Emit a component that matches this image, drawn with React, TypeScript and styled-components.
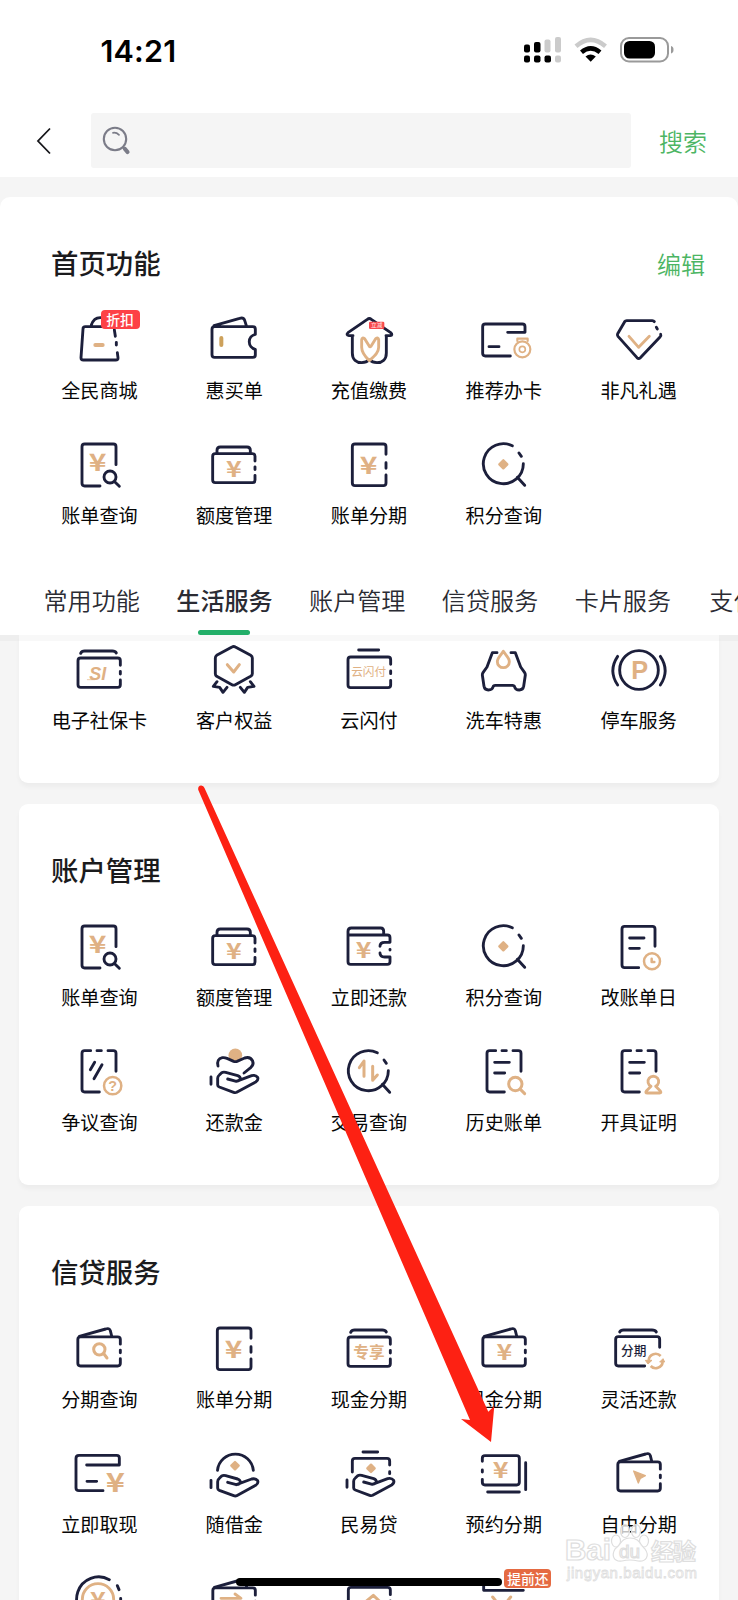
import React from "react";
import styled, { createGlobalStyle } from "styled-components";

const NAVY = "#1c1f3b";
const TAN = "#dfb184";
const CJK = '"Noto Sans CJK SC", "Liberation Sans", sans-serif';

const GlobalStyle = createGlobalStyle`
  * { box-sizing: border-box; }
  body { margin: 0; background: #f5f5f5; font-family: ${CJK}; color: #0b0b0b; }
`;

const Screen = styled.div`
  position: relative;
  width: 738px;
  height: 1600px;
  overflow: hidden;
  display: flex;
  flex-direction: column;
  background: #f5f5f5;
`;

const StatusBar = styled.div`
  flex: none;
  height: 100px;
  padding: 37px 64px 0 100.5px;
  display: flex;
  justify-content: space-between;
  align-items: flex-start;
  background: #fff;
`;

const Clock = styled.div`
  font: 600 30.5px/27px Inter, sans-serif;
  letter-spacing: 0.2px;
  color: #000;
`;

const StatusIcons = styled.svg`
  display: block;
  width: 151px;
  height: 27px;
`;

const SearchHeader = styled.div`
  flex: none;
  height: 77px;
  padding: 13px 31px 9px 36px;
  display: flex;
  align-items: center;
  background: #fff;
`;

const BackIcon = styled.svg`
  width: 16px;
  height: 28px;
  margin-right: 39px;
`;

const SearchField = styled.div`
  width: 540px;
  height: 55px;
  padding-left: 11px;
  display: flex;
  align-items: center;
  background: #f5f5f5;
  border-radius: 3px;
`;

const HeaderAction = styled.button`
  margin-left: auto;
  padding: 0;
  border: 0;
  background: none;
  font: 350 24px/32px ${CJK};
  color: #4cb563;
`;

const Panel = styled.section<{ $home?: boolean; $clipped?: boolean }>`
  flex: none;
  margin: ${(p) => (p.$home ? "20px 0 0" : "0 19px 21px")};
  padding: ${(p) => (p.$clipped ? "4.5px 13px 18px" : p.$home ? "47px 32px 18.2px" : "46.5px 13px 18.7px")};
  height: ${(p) => (p.$clipped ? "148.5px" : "auto")};
  background: #fff;
  border-radius: ${(p) => (p.$home ? "10px 10px 0 0" : p.$clipped ? "0 0 9px 9px" : "9px")};
  box-shadow: ${(p) => (p.$home ? "none" : "0 4px 4px rgba(0, 0, 0, 0.035)")};
`;

const PanelHead = styled.div<{ $home?: boolean }>`
  height: 40px;
  margin-bottom: 25px;
  padding: ${(p) => (p.$home ? "0 1px 0 19px" : "0 19px")};
  display: flex;
  align-items: center;
`;

const PanelTitle = styled.h2`
  margin: -4px 0 0;
  font: 500 27.4px/40px ${CJK};
  color: #1b1b1d;
`;

const ServiceGrid = styled.div`
  display: grid;
  grid-template-columns: repeat(5, 134.8px);
  grid-auto-rows: 125.4px;
`;

const Service = styled.div`
  position: relative;
  display: flex;
  flex-direction: column;
  align-items: center;
`;

const ServiceIcon = styled.svg`
  flex: none;
  display: block;
  width: 70px;
  height: 60px;
  overflow: visible;
  fill: none;
  stroke: ${NAVY};
  stroke-width: 8.6;
  stroke-linecap: round;
  stroke-linejoin: round;
  font-family: ${CJK};

  text {
    stroke: none;
    fill: ${TAN};
    text-anchor: middle;
  }
`;

const ServiceLabel = styled.span`
  margin-top: 10px;
  font: 400 19.1px/22px ${CJK};
  color: #060606;
  white-space: nowrap;
`;

const Badge = styled.span<{ $tone: "red" | "orange" }>`
  position: absolute;
  top: ${(p) => (p.$tone === "red" ? "1px" : "0")};
  left: ${(p) => (p.$tone === "red" ? "68.5px" : "68px")};
  width: ${(p) => (p.$tone === "red" ? "39px" : "47px")};
  height: 19px;
  border-radius: 4px;
  background: ${(p) => (p.$tone === "red" ? "#fd4146" : "#e56a42")};
  color: #fff;
  text-align: center;
  font: 500 13.8px/18px ${CJK};
  z-index: 1;
`;

const Tabs = styled.nav`
  position: relative;
  z-index: 2;
  flex: none;
  height: 57px;
  padding-left: 43.5px;
  display: flex;
  gap: 36.4px;
  background: #fff;
  box-shadow: 0 6px 0 rgba(0, 0, 0, 0.026);
`;

const Tab = styled.div<{ $active?: boolean }>`
  flex: none;
  height: 57px;
  display: flex;
  flex-direction: column;
  align-items: center;
  justify-content: space-between;
  font: ${(p) => (p.$active ? 500 : 350)} 24.1px/44px ${CJK};
  color: #2a2b33;

  &::after {
    content: "";
    width: 52px;
    height: 5px;
    border-radius: 3px;
    background: ${(p) => (p.$active ? "#22ae68" : "transparent")};
  }
`;

const HomeIndicator = styled.div`
  position: absolute;
  left: 236px;
  top: 1578px;
  width: 266px;
  height: 8px;
  border-radius: 4px;
  background: #000;
`;

const Overlay = styled.svg`
  position: absolute;
  inset: 0;
  width: 738px;
  height: 1600px;
  pointer-events: none;
`;

const Yen = ({ x, y, size = 74 }: { x: number; y: number; size?: number }) => (
  <text
    transform={`translate(${x} ${y + size * 0.385}) scale(1.22 1)`}
    fontSize={size}
    fontWeight={700}
  >
    ¥
  </text>
);

const DashedBox = ({ l, r, t, b }: { l: number; r: number; t: number; b: number }) => {
  const m = (t + b) / 2;
  return (
    <path
      d={`M${r} ${t + 22}V${t + 8}Q${r} ${t} ${r - 8} ${t}H${l + 8}Q${l} ${t} ${l} ${t + 8}V${b - 8}Q${l} ${b} ${l + 8} ${b}H${r - 8}Q${r} ${b} ${r} ${b - 8}V${b - 22}M${r} ${m - 4}V${m + 4}`}
    />
  );
};

const Wallet = ({ children }: { children?: React.ReactNode }) => (
  <>
    <DashedBox l={41.5} r={169} t={56.5} b={144} />
    <path d="M46 55L125 33Q136 29 139 38L143 54" />
    {children}
  </>
);

const LidBox = ({ children }: { children?: React.ReactNode }) => (
  <>
    <DashedBox l={42} r={169} t={57} b={145} />
    <path d="M50 43Q53 36 62 36H145Q154 36 157 42" />
    {children}
  </>
);

const Lens = () => (
  <path d="M163 89A60 60 0 1 1 130 35.500M150 57L157 67M145 130L167 154" />
);

const DashedDoc = () => (
  <path d="M106 153H62Q54 153 54 145V37Q54 29 62 29H80M99 29H112M132 29H148Q156 29 156 37V91" />
);

const Palm = () => (
  <path d="M36 112V134M86 118L112 125Q123 124 124 117Q124 111 116 108L80 98Q73 96 68 99L61 106Q56 110 56 116V136Q56 140 61 142L104 158Q109 160 113 158L170 127Q179 121 176 113Q170 105 158 108L112 125" />
);

const Gem = ({ x, y, r = 15 }: { x: number; y: number; r?: number }) => (
  <path
    d={`M${x} ${y - r + 3}L${x + r - 3} ${y}L${x} ${y + r - 3}L${x - r + 3} ${y}Z`}
    fill={TAN}
    stroke={TAN}
    strokeWidth={7}
  />
);

const icons: Record<string, React.ReactNode> = {
  bag: (
    <>
      <path d="M150 53H64Q57 53 57 60L51 146Q51 153 58 153H155Q163 153 162 146L160 131M151 62L154 82M157 100V108M82 48Q90 24 112 26" />
      <path d="M94 108H116" stroke={TAN} strokeWidth={12} />
    </>
  ),
  notchWallet: (
    <>
      <path d="M169 76V61Q169 53 161 53H47Q39 53 39 61V137Q39 145 47 145H161Q169 145 169 138V121A23 23 0 0 1 169 76M45 50L122 28Q133 24 137 34L142 50" />
      <path d="M67 87V108" stroke="#cda15b" strokeWidth={12} />
    </>
  ),
  house: (
    <>
      <path d="M57 80H45Q35 78 42 71L100 31Q106 26 112 31L170 71Q178 78 168 80H156M55 80V132C55 152 68 161 83 161Q98 160 104 153M157 80V132C157 152 144 161 129 161Q114 160 108 153" />
      <path d="M106 155C90 140 83 130 83 115V92Q84 84 92 89L106 112Q108 115 111 112L125 89Q133 84 134 92V115C134 130 122 140 106 155Z" stroke={TAN} />
      <rect x="105" y="38" width="46" height="22" rx="4" fill="#f8484c" stroke="none" />
      <text x="128" y="55" fontSize="17" style={{ fill: "#ffe6e6" }}>立减</text>
    </>
  ),
  medalCard: (
    <>
      <path d="M124 141H49Q41 141 41 133V53Q41 45 49 45H160Q168 45 168 53V70H116M60 113H90" />
      <g stroke={TAN} strokeWidth={6.5}>
        <circle cx="160" cy="121" r="24" />
        <circle cx="160" cy="121" r="9" strokeWidth={5} />
        <path d="M145 96V89H176V96" />
      </g>
    </>
  ),
  diamond: (
    <>
      <path d="M151 38Q149 35 145 35H68Q64 35 62 38L41 74Q39 78 42 82L99 146Q104 151 109 146L168 84Q172 80 170 76M157 55L160 60" />
      <path d="M75 82L104 115L136 82" stroke={TAN} strokeWidth={8.500} />
    </>
  ),
  billSearch: (
    <>
      <path d="M108 156H62Q54 156 54 148V38Q54 30 62 30H148Q156 30 156 38V92M152 143L166 157" />
      <circle cx="138" cy="129" r="18" />
      <Yen x={101} y={83} />
    </>
  ),
  limit: (
    <>
      <DashedBox l={41} r={168} t={59} b={146} />
      <path d="M54 56V49Q54 39 64 39H144Q154 39 154 49V56" />
      <Yen x={105} y={103} size={66} />
    </>
  ),
  billSplit: (
    <>
      <path d="M156 61V38Q156 30 148 30H63Q55 30 55 38V147Q55 155 63 155H148Q156 155 156 147V123M156 86V103" />
      <Yen x={104} y={92} />
    </>
  ),
  points: (
    <>
      <Lens />
      <Gem x={103} y={91} />
    </>
  ),
  socialCard: (
    <LidBox>
      <path d="M70 122H92" stroke={TAN} strokeWidth={2} />
      <text x="101" y="122" fontSize="54" fontWeight={700} fontStyle="italic" fontFamily="Liberation Sans">SI</text>
    </LidBox>
  ),
  rights: (
    <>
      <path d="M99 24Q104 21 109 24L155 49Q160 52 160 57V104Q160 109 155 112L109 137Q104 140 99 137L53 112Q49 109 49 104V57Q49 52 53 49ZM54 128L43 142L62 145L72 160L84 145M154 128L165 142L146 145L136 160L124 145" />
      <path d="M85 77L104 99L121 77" stroke={TAN} strokeWidth={9} />
    </>
  ),
  cloudPay: (
    <>
      <DashedBox l={42} r={170} t={54} b={146} />
      <path d="M74 33H134" />
      <text x="104" y="112" fontSize="35">云闪付</text>
    </>
  ),
  carWash: (
    <>
      <path d="M84 41H70L54 84L42 101Q40 104 40 108L45 142Q47 153 58 153Q70 153 72 144Q73 139 79 139H130Q136 139 137 144Q139 153 151 153Q162 153 164 142L169 108Q169 104 167 101L155 84L139 41H126" />
      <path d="M103 37C96 48 85 56 85 68A18 18 0 0 0 121 68C121 56 110 48 103 37Z" stroke={TAN} />
    </>
  ),
  parking: (
    <>
      <circle cx="105" cy="93" r="58" />
      <path d="M41 52Q12 95 41 138M169 52Q198 95 169 138" />
      <text x="107" y="121" fontSize="76" fontWeight={700} fontFamily="Liberation Sans">P</text>
    </>
  ),
  repay: (
    <>
      <path d="M42 58V46Q42 36 52 36H140Q149 36 149 46V56M42 57H160Q168 57 168 65V79H152Q138 79 138 91M138 111Q138 123 152 123H168V137Q168 145 160 145H50Q42 145 42 137V57M168 100V102" />
      <Yen x={89} y={102} size={66} />
    </>
  ),
  billDate: (
    <>
      <path d="M104 155H62Q54 155 54 147V39Q54 31 62 31H145Q153 31 153 39V91M77 66H120M77 97H106" />
      <g stroke={TAN} strokeWidth={7.500}>
        <circle cx="144" cy="136" r="24" />
        <path d="M143 128V138H151" />
      </g>
    </>
  ),
  dispute: (
    <>
      <DashedDoc />
      <path d="M92 64L79 86M114 71L90 113" />
      <circle cx="146" cy="134" r="26" stroke={TAN} strokeWidth={7.5} />
      <text x="146" y="150" fontSize="43" fontWeight={700} fontFamily="Liberation Sans">?</text>
    </>
  ),
  repayFund: (
    <>
      <circle cx="109" cy="43" r="20.500" fill={TAN} stroke="none" />
      <path d="M57 75Q52 54 70 50Q77 49 84 52L104 61Q109 63 114 61L137 51Q154 46 161 60Q165 70 156 79L135 96" fill="#fff" stroke="none" />
      <path d="M57 75Q52 54 70 50Q77 49 84 52L104 61Q109 63 114 61L137 51Q154 46 161 60Q165 70 156 79L135 96" />
      <g transform="translate(0 -4)"><Palm /></g>
    </>
  ),
  trades: (
    <>
      <Lens />
      <path d="M76 80L90 60V106M116 76V118L130 102" stroke={TAN} strokeWidth={9} />
    </>
  ),
  history: (
    <>
      <DashedDoc />
      <path d="M77 64H121M77 96H107" />
      <g stroke={TAN} strokeWidth={9}>
        <circle cx="139" cy="129" r="20" />
        <path d="M155 146L167 158" />
      </g>
    </>
  ),
  certificate: (
    <>
      <DashedDoc />
      <path d="M77 64H121M77 96H107" />
      <path d="M141 136A16 16 0 1 1 155 136L169 150Q173 156 167 156H130Q123 156 127 150Z" stroke={TAN} />
    </>
  ),
  planSearch: (
    <Wallet>
      <g stroke={TAN} strokeWidth={9}>
        <circle cx="106" cy="94" r="17" />
        <path d="M120 108L129 120" />
      </g>
    </Wallet>
  ),
  exclusive: (
    <LidBox>
      <text x="105" y="120" fontSize="47" fontWeight={700}>专享</text>
    </LidBox>
  ),
  cashWallet: (
    <Wallet>
      <Yen x={106} y={100} size={66} />
    </Wallet>
  ),
  flexible: (
    <>
      <path d="M167 88V64Q167 56 159 56H43Q35 56 35 64V136Q35 144 43 144H122M47 42Q50 36 59 36H144Q154 36 157 42" />
      <text x="89" y="111" fontSize="38" fontWeight={500} style={{ fill: NAVY }}>分期</text>
      <g stroke={TAN} strokeWidth={8} strokeLinecap="butt">
        <path d="M134 126A21 21 0 0 1 170 114M176 132A21 21 0 0 1 140 144" />
        <path d="M124 127H144L132 138ZM167 132H182L177 122Z" fill={TAN} strokeWidth={3} />
      </g>
    </>
  ),
  withdraw: (
    <>
      <path d="M117 143H45Q36 143 36 135V46Q36 37 45 37H158Q166 37 166 45V66H68M69 115H98" />
      <Yen x={154} y={115} size={80} />
    </>
  ),
  loan: (
    <>
      <path d="M55.500 82A54 54 0 0 1 163 82" />
      <Gem x={108} y={68} r={14} />
      <Palm />
    </>
  ),
  civilLoan: (
    <>
      <path d="M87 27H131M55 87V54Q55 46 63 46H159Q167 46 167 54V66M167 86V92" />
      <Gem x={111} y={76} r={14} />
      <g transform="translate(3 -1)"><Palm /></g>
    </>
  ),
  booking: (
    <>
      <path d="M40 55V46Q40 38 48 38H143Q151 38 151 46V118Q151 126 143 126H48Q40 126 40 118V109M40 81V87M170 59V140M56 147H151" />
      <Yen x={95} y={81} size={66} />
    </>
  ),
  freePlan: (
    <Wallet>
      <path d="M89 84L124 98L109 106L103 120Z" fill={TAN} stroke={TAN} strokeWidth={4} />
    </Wallet>
  ),
  coin: (
    <>
      <path d="M170 88A66 66 0 1 1 136 32M160 50L165 62" />
      <circle cx="102" cy="91" r="47" stroke={TAN} />
      <Yen x={102} y={92} size={66} />
    </>
  ),
  transfer: (
    <Wallet>
      <path d="M66 88H126L108 75" stroke={TAN} />
    </Wallet>
  ),
  tagBox: (
    <>
      <DashedBox l={43} r={169} t={55} b={144} />
      <path d="M98 96L118 79L136 96" stroke={TAN} strokeWidth={9} />
    </>
  ),
  early: (
    <>
      <path d="M44 50V64H163" />
      <path d="M71 84L98 118L125 84" stroke={TAN} strokeWidth={9} />
    </>
  ),
};

type Entry = { icon: string; label: string; badge?: string; tone?: "red" | "orange" };

const home: Entry[] = [
  { icon: "bag", label: "全民商城", badge: "折扣", tone: "red" },
  { icon: "notchWallet", label: "惠买单" },
  { icon: "house", label: "充值缴费" },
  { icon: "medalCard", label: "推荐办卡" },
  { icon: "diamond", label: "非凡礼遇" },
  { icon: "billSearch", label: "账单查询" },
  { icon: "limit", label: "额度管理" },
  { icon: "billSplit", label: "账单分期" },
  { icon: "points", label: "积分查询" },
];

const life: Entry[] = [
  { icon: "socialCard", label: "电子社保卡" },
  { icon: "rights", label: "客户权益" },
  { icon: "cloudPay", label: "云闪付" },
  { icon: "carWash", label: "洗车特惠" },
  { icon: "parking", label: "停车服务" },
];

const account: Entry[] = [
  { icon: "billSearch", label: "账单查询" },
  { icon: "limit", label: "额度管理" },
  { icon: "repay", label: "立即还款" },
  { icon: "points", label: "积分查询" },
  { icon: "billDate", label: "改账单日" },
  { icon: "dispute", label: "争议查询" },
  { icon: "repayFund", label: "还款金" },
  { icon: "trades", label: "交易查询" },
  { icon: "history", label: "历史账单" },
  { icon: "certificate", label: "开具证明" },
];

const credit: Entry[] = [
  { icon: "planSearch", label: "分期查询" },
  { icon: "billSplit", label: "账单分期" },
  { icon: "exclusive", label: "现金分期" },
  { icon: "cashWallet", label: "现金分期" },
  { icon: "flexible", label: "灵活还款" },
  { icon: "withdraw", label: "立即取现" },
  { icon: "loan", label: "随借金" },
  { icon: "civilLoan", label: "民易贷" },
  { icon: "booking", label: "预约分期" },
  { icon: "freePlan", label: "自由分期" },
  { icon: "coin", label: "" },
  { icon: "transfer", label: "" },
  { icon: "tagBox", label: "" },
  { icon: "early", label: "", badge: "提前还", tone: "orange" },
];

const tabs = ["常用功能", "生活服务", "账户管理", "信贷服务", "卡片服务", "支付"];

const Services = ({ items }: { items: Entry[] }) => (
  <ServiceGrid>
    {items.map((s, i) => (
      <Service key={i}>
        <ServiceIcon viewBox="0 0 210 180">{icons[s.icon]}</ServiceIcon>
        {s.label && <ServiceLabel>{s.label}</ServiceLabel>}
        {s.badge && <Badge $tone={s.tone ?? "red"}>{s.badge}</Badge>}
      </Service>
    ))}
  </ServiceGrid>
);

export default function App() {
  return (
    <Screen>
      <GlobalStyle />
      <StatusBar>
        <Clock>14:21</Clock>
        <StatusIcons viewBox="0 0 151 27">
          <g fill="#000">
            <rect x="1" y="7.500" width="6" height="8" rx="2" />
            <rect x="11" y="5" width="6.500" height="10.500" rx="2" />
            <rect x="1" y="18.500" width="6" height="7" rx="2" />
            <rect x="11" y="18.500" width="6.500" height="7" rx="2" />
            <rect x="21.500" y="18.500" width="6.500" height="7" rx="2" />
          </g>
          <g fill="#cbcbcb">
            <rect x="21.500" y="2.500" width="6" height="13" rx="2" />
            <rect x="32" y="0" width="6" height="15.500" rx="2" />
            <rect x="32" y="18.500" width="6" height="7" rx="2" />
          </g>
          <g fill="none" strokeWidth="4.500">
            <path d="M53 9.300Q67.500 -3.500 82.500 9.300" stroke="#cbcbcb" />
            <path d="M58.500 15.300Q67.500 7.500 77 15.300" stroke="#000" />
          </g>
          <path d="M62.500 19.500Q67.500 15.500 72.800 19.500L67.700 24.700Z" fill="#000" />
          <rect x="98" y="1" width="47" height="23.500" rx="8" fill="none" stroke="#9a9a9a" strokeWidth="2" />
          <rect x="101" y="4" width="31" height="17.500" rx="5.500" fill="#000" />
          <path d="M148 9Q150.500 9.500 150.500 12.800Q150.500 16 148 16.500Z" fill="#9a9a9a" />
        </StatusIcons>
      </StatusBar>

      <SearchHeader>
        <BackIcon viewBox="0 0 16 28" fill="none" stroke="#16161a" strokeWidth="1.800">
          <path d="M14 1.500L2 14L14 26.500" />
        </BackIcon>
        <SearchField>
          <svg width="30" height="30" viewBox="0 0 30 30" fill="none" stroke="#7b7c88" strokeLinecap="round">
            <circle cx="13" cy="13" r="11.200" strokeWidth="2.100" />
            <path d="M11 6.800Q14.500 6.300 17 8.800" strokeWidth="1.700" />
            <path d="M21 21.500L22.500 23" strokeWidth="2" />
            <path d="M23 23L25.500 26" strokeWidth="4.200" />
          </svg>
        </SearchField>
        <HeaderAction>搜索</HeaderAction>
      </SearchHeader>

      <Panel $home>
        <PanelHead $home>
          <PanelTitle>首页功能</PanelTitle>
          <HeaderAction>编辑</HeaderAction>
        </PanelHead>
        <Services items={home} />
      </Panel>

      <Tabs>
        {tabs.map((t, i) => (
          <Tab key={t} $active={i === 1}>{t}</Tab>
        ))}
      </Tabs>

      <Panel $clipped>
        <Services items={life} />
      </Panel>

      <Panel>
        <PanelHead>
          <PanelTitle>账户管理</PanelTitle>
        </PanelHead>
        <Services items={account} />
      </Panel>

      <Panel>
        <PanelHead>
          <PanelTitle>信贷服务</PanelTitle>
        </PanelHead>
        <Services items={credit} />
      </Panel>

      <HomeIndicator />

      <Overlay viewBox="0 0 738 1600">
        <path
          d="M198.300 790Q197.500 786 201 785.500Q203.500 785.300 204.500 788L488.300 1411.700L494.300 1406L491 1442L461 1419L470 1420Z"
          fill="#fd2113"
        />
        <g fill="#fff" fillOpacity="0.750" stroke="#dedede" strokeWidth="1.200" fontFamily="Liberation Sans" fontWeight="700">
          <text x="565" y="1560" fontSize="29" textLength="46" lengthAdjust="spacingAndGlyphs">Bai</text>
          <ellipse cx="616" cy="1541" rx="4.500" ry="6" />
          <ellipse cx="625" cy="1531" rx="4.500" ry="6.500" />
          <ellipse cx="636" cy="1531" rx="4.500" ry="6.500" />
          <ellipse cx="644" cy="1541" rx="4.500" ry="6" />
          <path d="M630 1538C640 1538 640 1545 645 1549C650 1556 646 1562 638 1561Q630 1559 622 1561C614 1562 611 1556 615 1549C621 1545 621 1538 630 1538Z" />
          <text x="619" y="1558" fontSize="19" fontWeight="400">du</text>
          <text x="651" y="1560" fontSize="23" fontFamily="Noto Sans CJK SC" textLength="45">经验</text>
          <text x="567" y="1578" fontSize="15" fontWeight="400" strokeWidth="0.800" textLength="130">jingyan.baidu.com</text>
        </g>
      </Overlay>
    </Screen>
  );
}
